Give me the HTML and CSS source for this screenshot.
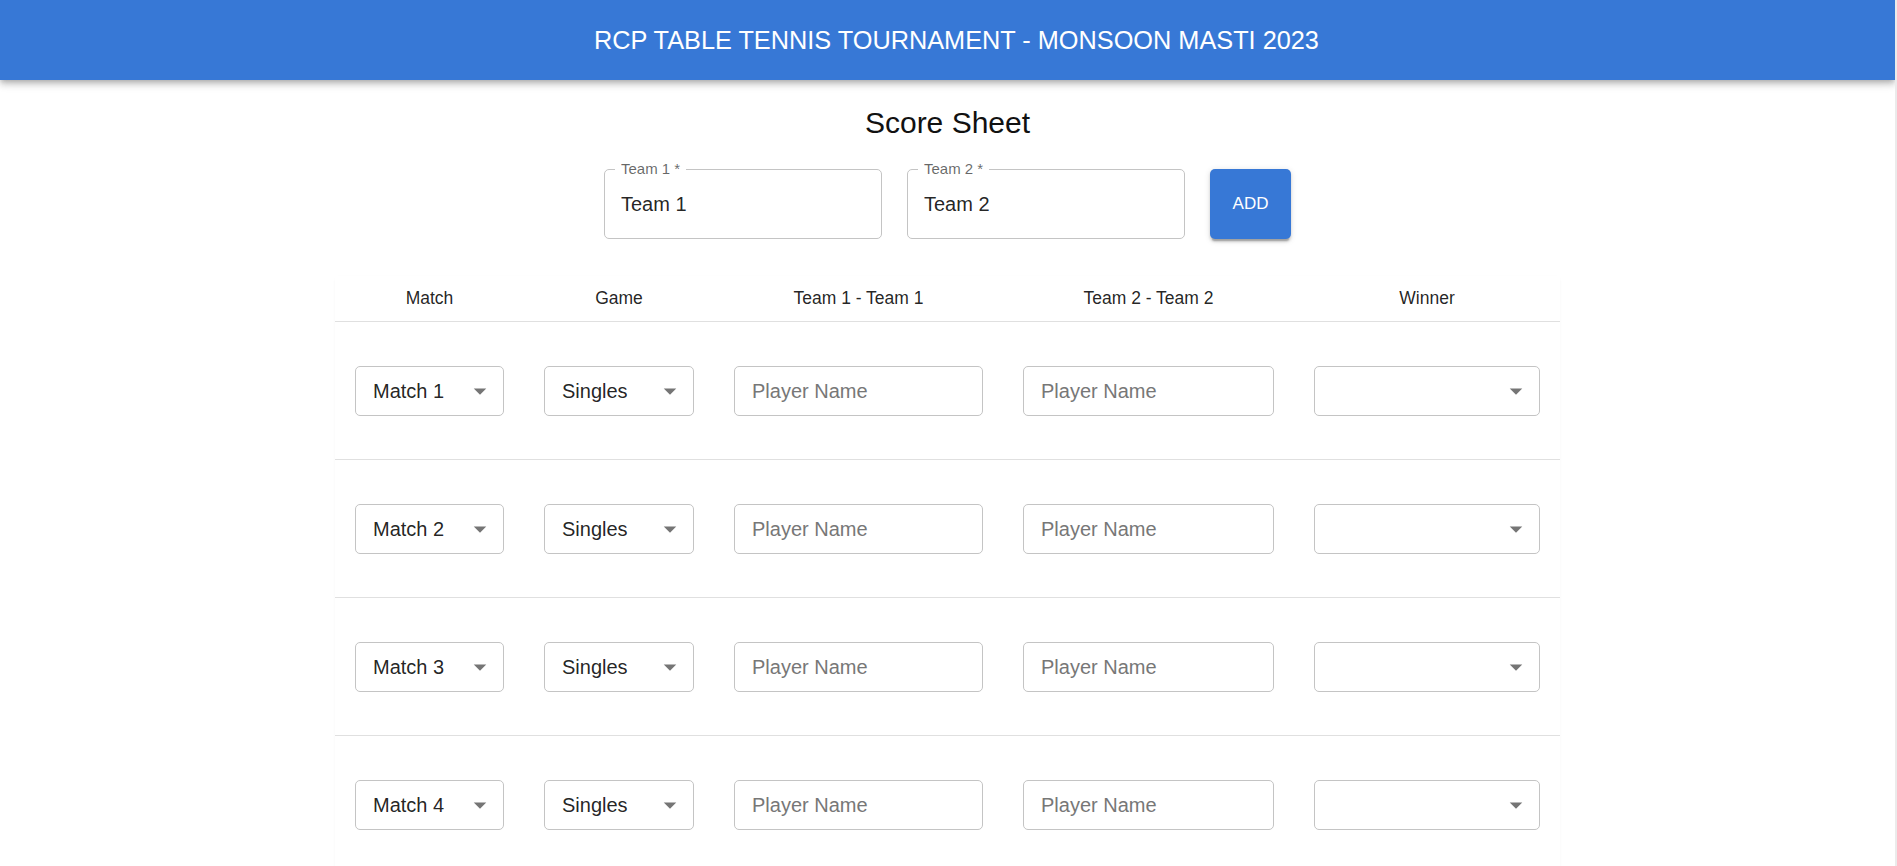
FILE: index.html
```html
<!DOCTYPE html>
<html lang="en">
<head>
<meta charset="utf-8">
<title>Score Sheet</title>
<link rel="stylesheet" href="styles.css">
</head>
<body>
<header class="appbar">
  <h1 class="appbar-title">RCP TABLE TENNIS TOURNAMENT - MONSOON MASTI 2023</h1>
</header>
<main class="page">
  <h2 class="sheet-title">Score Sheet</h2>
  <div class="teams">
    <div class="field">
      <label class="field-label">Team 1 *</label>
      <input class="field-input" value="Team 1">
    </div>
    <div class="field">
      <label class="field-label">Team 2 *</label>
      <input class="field-input" value="Team 2">
    </div>
    <button class="add-btn">ADD</button>
  </div>
  <div class="paper">
    <table class="score-table">
      <colgroup>
        <col class="col-match">
        <col class="col-game">
        <col class="col-team1">
        <col class="col-team2">
        <col class="col-winner">
      </colgroup>
      <thead>
        <tr>
          <th>Match</th>
          <th>Game</th>
          <th>Team 1 - Team 1</th>
          <th>Team 2 - Team 2</th>
          <th>Winner</th>
        </tr>
      </thead>
      <tbody>
        <tr>
          <td><div class="select"><span>Match 1</span><svg class="arrow" viewBox="0 0 24 24"><path d="M7 10l5 5 5-5z"/></svg></div></td>
          <td><div class="select"><span>Singles</span><svg class="arrow" viewBox="0 0 24 24"><path d="M7 10l5 5 5-5z"/></svg></div></td>
          <td><input class="text-input" placeholder="Player Name"></td>
          <td><input class="text-input" placeholder="Player Name"></td>
          <td><div class="select"><span></span><svg class="arrow" viewBox="0 0 24 24"><path d="M7 10l5 5 5-5z"/></svg></div></td>
        </tr>
        <tr>
          <td><div class="select"><span>Match 2</span><svg class="arrow" viewBox="0 0 24 24"><path d="M7 10l5 5 5-5z"/></svg></div></td>
          <td><div class="select"><span>Singles</span><svg class="arrow" viewBox="0 0 24 24"><path d="M7 10l5 5 5-5z"/></svg></div></td>
          <td><input class="text-input" placeholder="Player Name"></td>
          <td><input class="text-input" placeholder="Player Name"></td>
          <td><div class="select"><span></span><svg class="arrow" viewBox="0 0 24 24"><path d="M7 10l5 5 5-5z"/></svg></div></td>
        </tr>
        <tr>
          <td><div class="select"><span>Match 3</span><svg class="arrow" viewBox="0 0 24 24"><path d="M7 10l5 5 5-5z"/></svg></div></td>
          <td><div class="select"><span>Singles</span><svg class="arrow" viewBox="0 0 24 24"><path d="M7 10l5 5 5-5z"/></svg></div></td>
          <td><input class="text-input" placeholder="Player Name"></td>
          <td><input class="text-input" placeholder="Player Name"></td>
          <td><div class="select"><span></span><svg class="arrow" viewBox="0 0 24 24"><path d="M7 10l5 5 5-5z"/></svg></div></td>
        </tr>
        <tr>
          <td><div class="select"><span>Match 4</span><svg class="arrow" viewBox="0 0 24 24"><path d="M7 10l5 5 5-5z"/></svg></div></td>
          <td><div class="select"><span>Singles</span><svg class="arrow" viewBox="0 0 24 24"><path d="M7 10l5 5 5-5z"/></svg></div></td>
          <td><input class="text-input" placeholder="Player Name"></td>
          <td><input class="text-input" placeholder="Player Name"></td>
          <td><div class="select"><span></span><svg class="arrow" viewBox="0 0 24 24"><path d="M7 10l5 5 5-5z"/></svg></div></td>
        </tr>
      </tbody>
    </table>
  </div>
</main>
</body>
</html>
```
FILE: styles.css
```css
html {
  overflow: hidden;
  background: #ebebeb;
}

body {
  margin: 0 2px 0 0;
  min-height: 100vh;
  background: #fff;
  font-family: "Liberation Sans", Arial, sans-serif;
  color: rgba(0, 0, 0, 0.87);
}

.appbar {
  position: relative;
  z-index: 1;
  height: 80px;
  padding-left: 18px;
  background: #3778d6;
  display: flex;
  align-items: center;
  justify-content: center;
  box-shadow: 0 2.5px 5px -1.25px rgba(0, 0, 0, 0.2),
              0 5px 6px 0 rgba(0, 0, 0, 0.14),
              0 1.25px 12.5px 0 rgba(0, 0, 0, 0.12);
}

.appbar-title {
  margin: 0;
  font-size: 25.3px;
  font-weight: 400;
  line-height: 40px;
  color: #fff;
}

.page {
  background: #fff;
}

.sheet-title {
  margin: 0;
  padding: 23px 0 26px;
  font-size: 30px;
  font-weight: 400;
  line-height: 40px;
  text-align: center;
  color: #111;
}

.teams {
  display: flex;
  justify-content: center;
  gap: 25px;
}

.field {
  position: relative;
  width: 278px;
  height: 70px;
  box-sizing: border-box;
  border: 1px solid #c4c4c4;
  border-radius: 5px;
  display: flex;
  align-items: center;
}

.field-label {
  position: absolute;
  top: -10px;
  left: 10px;
  padding: 0 6px;
  background: #fff;
  font-size: 15px;
  line-height: 17px;
  color: rgba(0, 0, 0, 0.6);
}

.field-input {
  width: 100%;
  border: 0;
  outline: 0;
  background: transparent;
  padding: 0 16px;
  font-family: "Liberation Sans", Arial, sans-serif;
  font-size: 20px;
  color: rgba(0, 0, 0, 0.87);
}

.add-btn {
  width: 81px;
  height: 70px;
  border: 0;
  border-radius: 5px;
  background: #3778d6;
  color: #fff;
  font-family: "Liberation Sans", Arial, sans-serif;
  font-size: 17px;
  box-shadow: 0 3.75px 1.25px -2.5px rgba(0, 0, 0, 0.2),
              0 2.5px 2.5px 0 rgba(0, 0, 0, 0.14),
              0 1.25px 6px 0 rgba(0, 0, 0, 0.12);
}

.paper {
  width: 1225px;
  margin: 37px auto 0;
  background: #fff;
  border-radius: 5px;
  box-shadow: 0 1px 3px rgba(0, 0, 0, 0.04);
}

.score-table {
  width: 100%;
  border-collapse: collapse;
  table-layout: fixed;
  background: #fff;
}

.col-match { width: 189px; }
.col-game { width: 190px; }
.col-team1 { width: 289px; }
.col-team2 { width: 291px; }
.col-winner { width: 266px; }

.score-table th {
  height: 45px;
  padding: 0 20px;
  font-size: 17.5px;
  font-weight: 400;
  text-align: center;
  color: rgba(0, 0, 0, 0.87);
  border-bottom: 1px solid #e0e0e0;
}

.score-table td {
  padding: 44px 20px 43px;
  border-bottom: 1px solid #e0e0e0;
  vertical-align: middle;
}

.select {
  height: 50px;
  box-sizing: border-box;
  border: 1px solid #c4c4c4;
  border-radius: 5px;
  display: flex;
  align-items: center;
  justify-content: space-between;
  padding: 0 8px 0 17px;
  font-size: 20px;
  color: rgba(0, 0, 0, 0.87);
}

.arrow {
  width: 30px;
  height: 30px;
  fill: #757575;
  flex: none;
}

.text-input {
  display: block;
  width: 100%;
  height: 50px;
  box-sizing: border-box;
  border: 1px solid #c4c4c4;
  border-radius: 5px;
  padding: 0 17px;
  outline: 0;
  font-family: "Liberation Sans", Arial, sans-serif;
  font-size: 20px;
  color: rgba(0, 0, 0, 0.87);
}

.text-input::placeholder {
  color: #777;
}
```
